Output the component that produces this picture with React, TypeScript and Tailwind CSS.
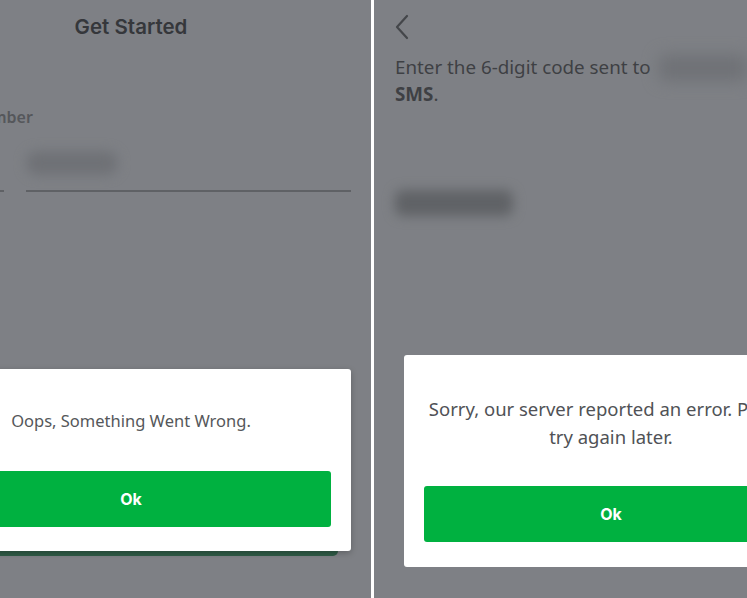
import React from "react";

const font = { fontFamily: '"Noto Sans", "Open Sans", sans-serif' };

function LeftScreen() {
  return (
    <div className="relative h-full w-[371px] overflow-hidden bg-[#7e8085]" style={font}>
      <div className="ml-[-89px] flex w-[440px] flex-col">
        <div className="flex h-[54px] items-center justify-center">
          <span className="text-[20.5px] font-semibold text-[#35373b]" style={{ fontFamily: 'Inter, "Noto Sans", sans-serif' }}>
            Get Started
          </span>
        </div>
        <div className="mt-[51px] pl-[0px] text-[16px] font-semibold text-[#55575b]">Mobile Number</div>
        <div className="mt-[8px] flex items-end gap-[22px]">
          <div className="flex h-[55px] w-[93px] flex-col justify-end">
            <div className="h-[2px] w-full bg-[#5f6165]" />
          </div>
          <div className="flex h-[55px] flex-1 flex-col justify-between">
            <div className="ml-[0px] mt-[14px] h-[24px] w-[92px] rounded-full bg-[#6f7176] blur-[6px]" />
            <div className="h-[2px] w-full bg-[#5f6165]" />
          </div>
        </div>
      </div>
      <div className="absolute left-0 top-[546px] h-[10px] w-[338px] rounded-r-[10px] bg-[#2f5b46]" />
      <div className="absolute left-[-89px] top-[369px] flex h-[182px] w-[440px] flex-col items-center rounded-[3px] bg-white shadow-[0_2px_6px_rgba(0,0,0,0.25)]">
        <div className="flex h-[102px] items-center pt-[2px] text-[16.5px] text-[#55575a]">Oops, Something Went Wrong.</div>
        <button className="flex h-[56px] w-[400px] items-center justify-center rounded-[3px] bg-[#00b140] text-[16px] font-bold text-white" style={{ fontFamily: 'Inter, "Noto Sans", sans-serif' }}>
          Ok
        </button>
      </div>
    </div>
  );
}

function RightScreen() {
  return (
    <div className="relative h-full w-[373px] overflow-hidden bg-[#7e8085]" style={font}>
      <div className="flex flex-col pl-[21px]">
        <div className="flex h-[54px] items-center">
          <svg width="14" height="26" viewBox="0 0 14 26" fill="none">
            <path d="M12 2 L2 13 L12 24" stroke="#44464a" strokeWidth="2.2" strokeLinecap="round" strokeLinejoin="round" />
          </svg>
        </div>
        <div className="relative text-[18.8px] leading-[27px] text-[#3e4044]">
          <div className="flex items-center whitespace-nowrap">
            <span>Enter the 6-digit code sent to</span>
            <span className="ml-[8px] inline-block h-[26px] w-[130px] rounded-[6px] bg-[#6f7176] blur-[8px]" />
          </div>
          <div>
            <span className="font-bold">SMS</span>.
          </div>
        </div>
        <div className="mt-[82px] h-[26px] w-[118px] rounded-[8px] bg-[#606266] blur-[6px]" />
      </div>
      <div className="absolute left-[30px] top-[355px] flex h-[212px] w-[414px] flex-col items-center rounded-[3px] bg-white">
        <div className="flex h-[131px] flex-col items-center justify-center whitespace-nowrap pt-[4px] text-center text-[18.5px] leading-[28px] text-[#505256]">
          <div>Sorry, our server reported an error. Please</div>
          <div>try again later.</div>
        </div>
        <button className="flex h-[56px] w-[374px] items-center justify-center rounded-[3px] bg-[#00b140] text-[16px] font-bold text-white" style={{ fontFamily: 'Inter, "Noto Sans", sans-serif' }}>
          Ok
        </button>
      </div>
    </div>
  );
}

export default function App() {
  return (
    <div className="flex h-[598px] w-[747px] gap-[3px] overflow-hidden bg-white">
      <LeftScreen />
      <RightScreen />
    </div>
  );
}
